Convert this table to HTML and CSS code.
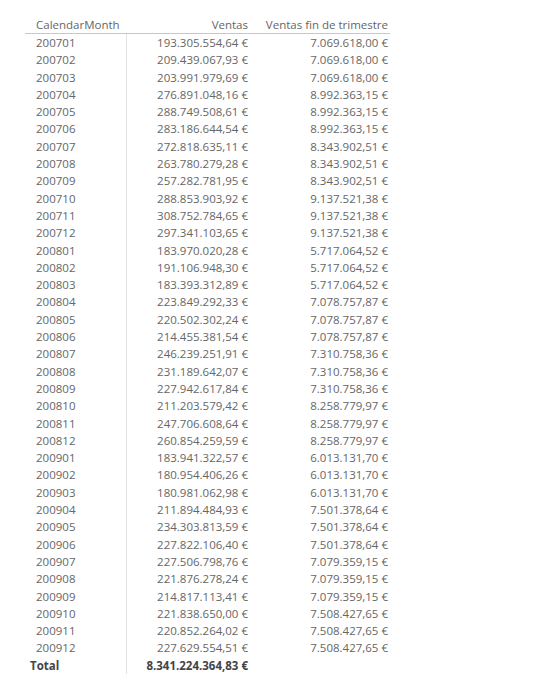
FILE: index.html
```html
<!DOCTYPE html>
<html>
<head>
<meta charset="utf-8">
<link rel="stylesheet" href="styles.css">
</head>
<body>
<div class="wrap">
<table class="matrix">
<thead>
<tr><th class="c1">CalendarMonth</th><th class="c2">Ventas</th><th class="c3">Ventas fin de trimestre</th></tr>
</thead>
<tbody>
<tr><td class="c1">200701</td><td class="c2">193.305.554,64 €</td><td class="c3">7.069.618,00 €</td></tr>
<tr><td class="c1">200702</td><td class="c2">209.439.067,93 €</td><td class="c3">7.069.618,00 €</td></tr>
<tr><td class="c1">200703</td><td class="c2">203.991.979,69 €</td><td class="c3">7.069.618,00 €</td></tr>
<tr><td class="c1">200704</td><td class="c2">276.891.048,16 €</td><td class="c3">8.992.363,15 €</td></tr>
<tr><td class="c1">200705</td><td class="c2">288.749.508,61 €</td><td class="c3">8.992.363,15 €</td></tr>
<tr><td class="c1">200706</td><td class="c2">283.186.644,54 €</td><td class="c3">8.992.363,15 €</td></tr>
<tr><td class="c1">200707</td><td class="c2">272.818.635,11 €</td><td class="c3">8.343.902,51 €</td></tr>
<tr><td class="c1">200708</td><td class="c2">263.780.279,28 €</td><td class="c3">8.343.902,51 €</td></tr>
<tr><td class="c1">200709</td><td class="c2">257.282.781,95 €</td><td class="c3">8.343.902,51 €</td></tr>
<tr><td class="c1">200710</td><td class="c2">288.853.903,92 €</td><td class="c3">9.137.521,38 €</td></tr>
<tr><td class="c1">200711</td><td class="c2">308.752.784,65 €</td><td class="c3">9.137.521,38 €</td></tr>
<tr><td class="c1">200712</td><td class="c2">297.341.103,65 €</td><td class="c3">9.137.521,38 €</td></tr>
<tr><td class="c1">200801</td><td class="c2">183.970.020,28 €</td><td class="c3">5.717.064,52 €</td></tr>
<tr><td class="c1">200802</td><td class="c2">191.106.948,30 €</td><td class="c3">5.717.064,52 €</td></tr>
<tr><td class="c1">200803</td><td class="c2">183.393.312,89 €</td><td class="c3">5.717.064,52 €</td></tr>
<tr><td class="c1">200804</td><td class="c2">223.849.292,33 €</td><td class="c3">7.078.757,87 €</td></tr>
<tr><td class="c1">200805</td><td class="c2">220.502.302,24 €</td><td class="c3">7.078.757,87 €</td></tr>
<tr><td class="c1">200806</td><td class="c2">214.455.381,54 €</td><td class="c3">7.078.757,87 €</td></tr>
<tr><td class="c1">200807</td><td class="c2">246.239.251,91 €</td><td class="c3">7.310.758,36 €</td></tr>
<tr><td class="c1">200808</td><td class="c2">231.189.642,07 €</td><td class="c3">7.310.758,36 €</td></tr>
<tr><td class="c1">200809</td><td class="c2">227.942.617,84 €</td><td class="c3">7.310.758,36 €</td></tr>
<tr><td class="c1">200810</td><td class="c2">211.203.579,42 €</td><td class="c3">8.258.779,97 €</td></tr>
<tr><td class="c1">200811</td><td class="c2">247.706.608,64 €</td><td class="c3">8.258.779,97 €</td></tr>
<tr><td class="c1">200812</td><td class="c2">260.854.259,59 €</td><td class="c3">8.258.779,97 €</td></tr>
<tr><td class="c1">200901</td><td class="c2">183.941.322,57 €</td><td class="c3">6.013.131,70 €</td></tr>
<tr><td class="c1">200902</td><td class="c2">180.954.406,26 €</td><td class="c3">6.013.131,70 €</td></tr>
<tr><td class="c1">200903</td><td class="c2">180.981.062,98 €</td><td class="c3">6.013.131,70 €</td></tr>
<tr><td class="c1">200904</td><td class="c2">211.894.484,93 €</td><td class="c3">7.501.378,64 €</td></tr>
<tr><td class="c1">200905</td><td class="c2">234.303.813,59 €</td><td class="c3">7.501.378,64 €</td></tr>
<tr><td class="c1">200906</td><td class="c2">227.822.106,40 €</td><td class="c3">7.501.378,64 €</td></tr>
<tr><td class="c1">200907</td><td class="c2">227.506.798,76 €</td><td class="c3">7.079.359,15 €</td></tr>
<tr><td class="c1">200908</td><td class="c2">221.876.278,24 €</td><td class="c3">7.079.359,15 €</td></tr>
<tr><td class="c1">200909</td><td class="c2">214.817.113,41 €</td><td class="c3">7.079.359,15 €</td></tr>
<tr><td class="c1">200910</td><td class="c2">221.838.650,00 €</td><td class="c3">7.508.427,65 €</td></tr>
<tr><td class="c1">200911</td><td class="c2">220.852.264,02 €</td><td class="c3">7.508.427,65 €</td></tr>
<tr><td class="c1">200912</td><td class="c2">227.629.554,51 €</td><td class="c3">7.508.427,65 €</td></tr>
</tbody>
<tfoot>
<tr><td class="c1 tot">Total</td><td class="c2">8.341.224.364,83 €</td><td class="c3"></td></tr>
</tfoot>
</table>
</div>
</body>
</html>
```
FILE: styles.css
```css
html, body {
  margin: 0;
  padding: 0;
  background: #ffffff;
}
.wrap {
  padding: 16px 0 0 25px;
}
.matrix {
  border-collapse: collapse;
  font-family: "Open Sans", "Noto Sans", sans-serif;
  font-size: 11.5px;
  color: #666666;
  table-layout: fixed;
  width: 365px;
}
.matrix th, .matrix td {
  padding: 0;
  height: 17.3px;
  line-height: 17.3px;
  white-space: nowrap;
  font-weight: normal;
}
.matrix thead th {
  border-bottom: 1px solid #c8c8c8;
  height: 17px;
  line-height: 17px;
}
.c1 {
  width: 90px;
  text-align: left;
  padding-left: 11px !important;
  border-right: 1px solid #e3e3e3;
}
.c2 {
  width: 122px;
  text-align: right;
}
.c3 {
  text-align: right;
  padding-right: 2px !important;
}
.matrix thead .c1 {
  border-right: none;
}
.matrix tfoot td {
  font-weight: bold;
  color: #444444;
}
.matrix td.tot {
  padding-left: 5px !important;
}
```
